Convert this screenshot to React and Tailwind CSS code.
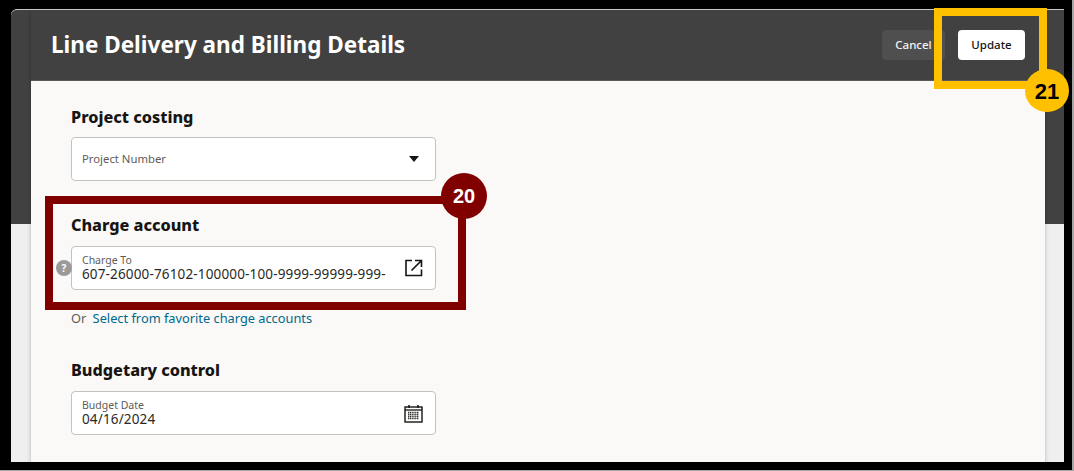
function Field({ label, value, children }) {
  return (
    <div className="flex h-[44px] w-[365px] items-center justify-between rounded-[4px] border border-[#c4c2bf] bg-white pl-[10px] pr-[12px]">
      <div className="flex flex-col">
        <span className="text-[10.5px] leading-[12px] text-[#5f5c58]">{label}</span>
        <span className="text-[13.5px] leading-[17px] tracking-[0.15px] text-[#2b2926]">{value}</span>
      </div>
      {children}
    </div>
  )
}

function Heading({ children }) {
  return <h2 className="text-[16.2px] font-extrabold leading-[24px] text-[#161513]">{children}</h2>
}

function Dialog() {
  return (
    <div className="absolute left-[20px] top-0 w-[1014px] overflow-hidden shadow-[0_0_4px_rgba(0,0,0,0.25)]">
      <header className="flex h-[71px] items-center justify-between border-b border-[#5c5a58] bg-[#414141] pl-[20px] pr-[20px]">
        <h1 className="text-[22.5px] font-bold text-white">Line Delivery and Billing Details</h1>
        <div className="flex items-center gap-[13px]">
          <button className="h-[30px] w-[63px] rounded-[4px] bg-[#4f4f4f] text-[11.5px] font-medium text-[#f5f4f2]">Cancel</button>
          <button className="h-[30px] w-[67px] rounded-[4px] bg-white text-[11.5px] font-medium text-[#161513]">Update</button>
        </div>
      </header>
      <div className="h-[400px] bg-[#faf9f7] pl-[40px] pt-[24px]">
        <Heading>Project costing</Heading>
        <div className="mt-[8px] flex h-[44px] w-[365px] items-center justify-between rounded-[4px] border border-[#c4c2bf] bg-white pl-[10px] pr-[16px]">
          <span className="text-[11.3px] text-[#5f5c58]">Project Number</span>
          <svg width="10" height="6" viewBox="0 0 10 6"><path d="M0 0h10L5 6z" fill="#161513" /></svg>
        </div>
        <div className="mt-[32px]">
          <Heading>Charge account</Heading>
        </div>
        <div className="relative mt-[9px]">
          <Field label="Charge To" value="607-26000-76102-100000-100-9999-99999-999-">
            <svg width="18" height="18" viewBox="0 0 18 18" fill="none" stroke="#161513" strokeWidth="1.6">
              <path d="M7 1.500H1v15h15.500V10.500" />
              <path d="M6.500 11.500 16 2M10 1.500h6.500V8" />
            </svg>
          </Field>
          <span className="absolute left-[-15px] top-[14px] flex h-[16px] w-[16px] items-center justify-center rounded-full bg-[#9b9a98] text-[10px] font-bold text-white">?</span>
        </div>
        <p className="mt-[19px] text-[12.8px] leading-[18px] text-[#5f5c58]">
          Or <a className="ml-[3px] text-[#00688c]">Select from favorite charge accounts</a>
        </p>
        <div className="mt-[31px]">
          <Heading>Budgetary control</Heading>
        </div>
        <div className="mt-[9px]">
          <Field label="Budget Date" value="04/16/2024">
            <svg width="19" height="19" viewBox="0 0 19 19" fill="none">
              <rect x="1" y="3" width="17" height="15" stroke="#161513" strokeWidth="1.4" />
              <path d="M1 6h17" stroke="#161513" strokeWidth="1.300" />
              <path d="M5 1v3M14 1v3" stroke="#161513" strokeWidth="1.500" />
              <path d="M4 8.500h11M4 10.500h11M4 12.500h11M4 14.500h11" stroke="#33312e" strokeWidth="1.300" strokeDasharray="1.200 0.600" />
            </svg>
          </Field>
        </div>
      </div>
    </div>
  )
}

export default function App() {
  return (
    <div className="h-[471px] w-[1074px] overflow-hidden border-b border-r-2 border-[#a6a6a6] bg-black pb-[8px] pl-[11px] pt-[9px] font-['Noto_Sans',sans-serif]">
      <div className="relative h-[453px] w-[1053px] overflow-hidden rounded-tl-[6px] border-t border-[#c8c8c8] bg-[#efefef]">
        <div className="h-[214px] bg-[#414141]" />
        <Dialog />
      </div>

      <div className="absolute left-[45px] top-[196px] h-[114px] w-[421px] border-[8px] border-[#800000]" />
      <div className="absolute left-[441px] top-[173px] flex h-[46px] w-[46px] items-center justify-center rounded-full bg-[#800000] font-['Liberation_Sans',sans-serif] text-[20px] font-bold text-white">20</div>

      <div className="absolute left-[934px] top-[8px] h-[81px] w-[113px] border-[8px] border-[#ffc000]" />
      <div className="absolute left-[1025px] top-[69px] flex h-[43px] w-[44px] items-center justify-center rounded-full bg-[#ffc000] pt-[1px] font-['Liberation_Sans',sans-serif] text-[22px] font-bold text-black">21</div>
    </div>
  )
}
